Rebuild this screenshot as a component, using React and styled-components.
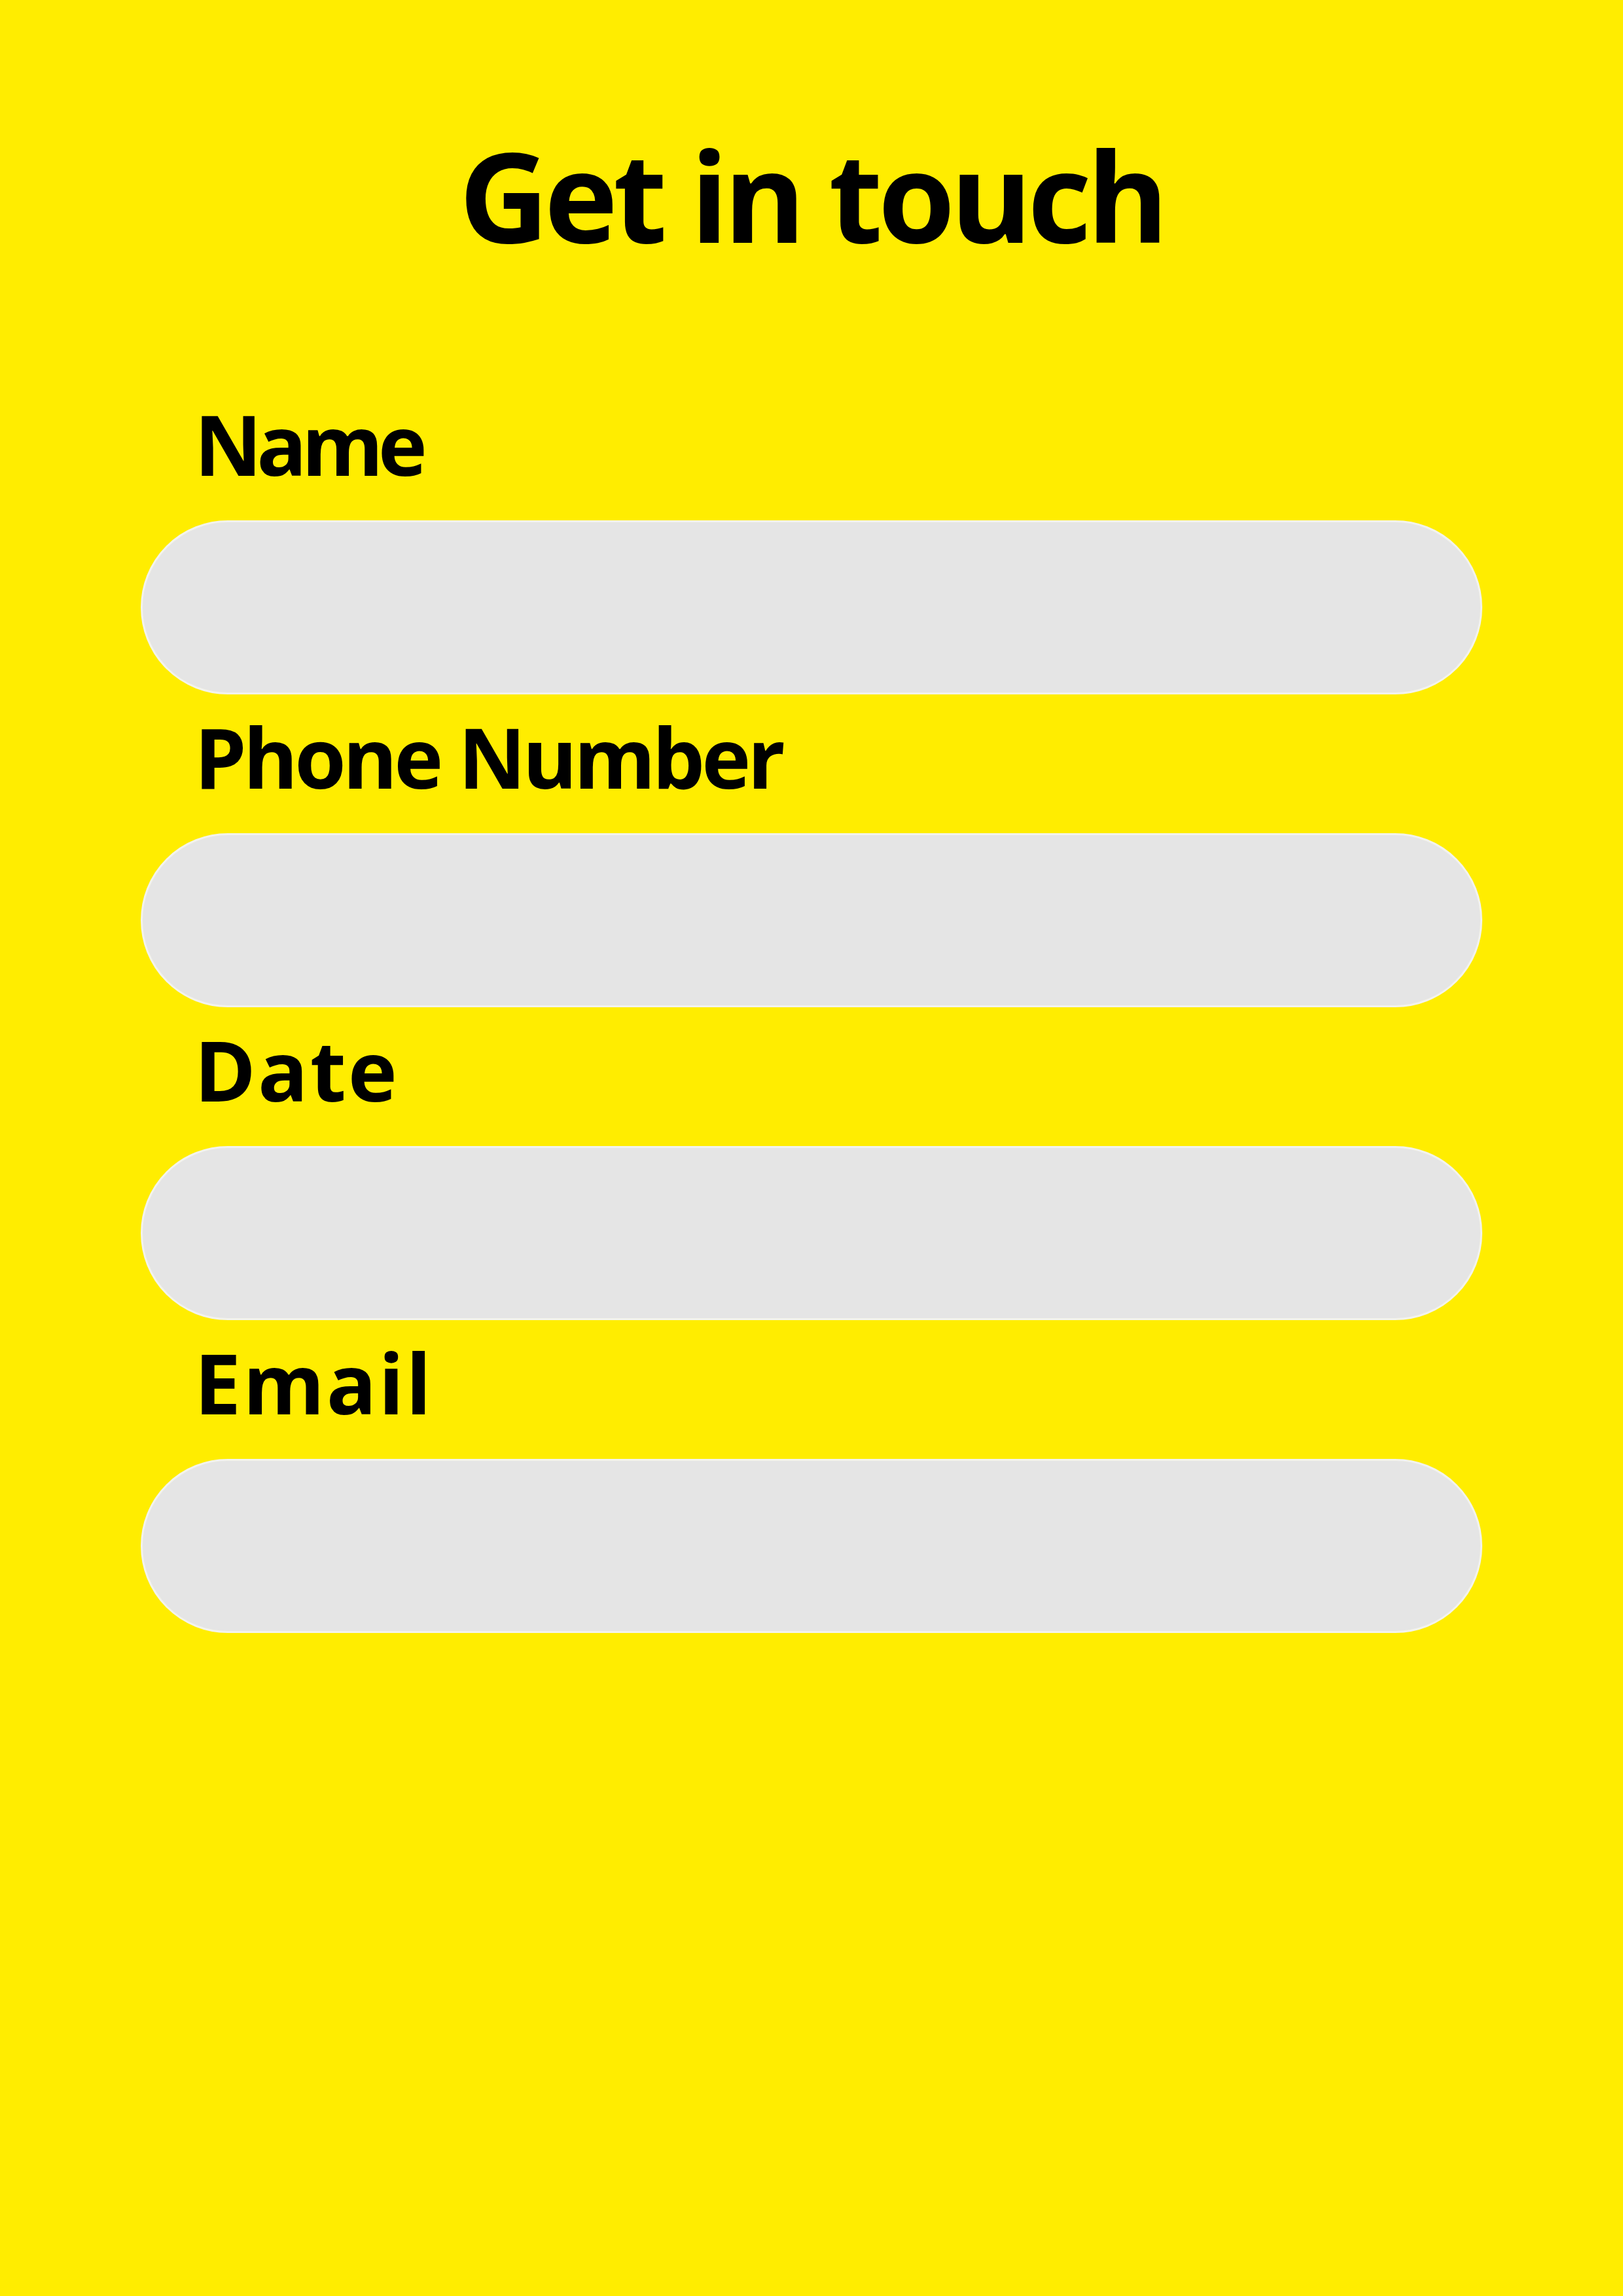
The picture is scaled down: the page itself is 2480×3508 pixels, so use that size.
import React from 'react'
import styled, { createGlobalStyle } from 'styled-components'

const GlobalStyle = createGlobalStyle`
  html, body {
    margin: 0;
    padding: 0;
    background: #ffed00;
  }
  body {
    font-family: 'Open Sans', 'Noto Sans', sans-serif;
  }
`

const Page = styled.div`
  min-height: 3508px;
  background: #ffed00;
  padding-top: 198px;
  box-sizing: border-box;
`

const Title = styled.h1`
  margin: 0 0 210px;
  text-align: center;
  font-size: 190px;
  line-height: 200px;
  font-weight: 700;
  color: #000;
  letter-spacing: -7px;
`

const Form = styled.form`
  width: 2050px;
  margin: 0 auto;
  display: flex;
  flex-direction: column;
  gap: 25px;
`

const Field = styled.div`
  display: flex;
  flex-direction: column;
`

const Label = styled.label`
  padding-left: 82px;
  margin-bottom: 47px;
  font-size: 127px;
  line-height: 140px;
  font-weight: 700;
  color: #000;
  letter-spacing: ${props => props.spacing}px;
`

const Input = styled.input`
  box-sizing: border-box;
  width: 100%;
  height: 266px;
  border-radius: 133px;
  border: 3px solid #f3f3ec;
  background: #e5e5e5;
  outline: none;
  padding: 0 90px;
  font-family: inherit;
  font-size: 90px;
`

const fields = [
  { id: 'name', label: 'Name', type: 'text', spacing: -8 },
  { id: 'phone', label: 'Phone Number', type: 'tel', spacing: -5 },
  { id: 'date', label: 'Date', type: 'text', spacing: 3 },
  { id: 'email', label: 'Email', type: 'email', spacing: 3 },
]

const App = () => {
  return (
    <Page>
      <GlobalStyle />
      <Title>Get in touch</Title>
      <Form>
        {fields.map(f => (
          <Field key={f.id}>
            <Label htmlFor={f.id} spacing={f.spacing}>{f.label}</Label>
            <Input id={f.id} type={f.type} />
          </Field>
        ))}
      </Form>
    </Page>
  )
}

export default App
